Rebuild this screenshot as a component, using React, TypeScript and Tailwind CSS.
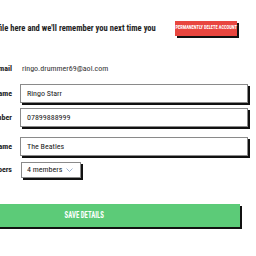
import React from 'react';

const font = { fontFamily: '"Roboto Condensed", "Liberation Sans Narrow", sans-serif' };

const Field = ({ label, value }: { label: string; value: string }) => (
    <div className="flex items-center">
        <label className="w-[92px] shrink-0 text-right text-[8px] font-bold text-[#222]">{label}</label>
        <div className="ml-[8px] w-[228px] h-[19px] flex items-center px-[6px] border border-[#8a8a8a] bg-white shadow-[2px_2px_0_#111] text-[8px] text-[#1a1a1a]">
            {value}
        </div>
    </div>
);

export default function App() {
    return (
        <div className="w-[256px] h-[256px] overflow-hidden bg-white" style={font}>
            <div className="-ml-[80px] w-[328px]">
                <div className="flex items-center justify-end pt-[21px] pr-[11px]">
                    <p className="whitespace-nowrap text-[9.6px] font-bold text-[#1e1e1e] origin-right scale-x-[0.89]">
                        Update your profile here and we'll remember you next time you
                    </p>
                    <button className="ml-[20px] w-[66px] h-[15px] bg-[#e8463f] shadow-[2px_2px_0_#111] text-white text-[4.5px] font-bold uppercase whitespace-nowrap">
                        Permanently delete account
                    </button>
                </div>

                <div className="mt-[27px] flex items-center">
                    <span className="w-[92px] text-right text-[8px] font-bold text-[#222]">Email</span>
                    <span className="ml-[10px] text-[8px] text-[#333]">ringo.drummer69@aol.com</span>
                </div>

                <div className="mt-[9px] flex flex-col gap-[5px]">
                    <Field label="Your name" value="Ringo Starr" />
                    <Field label="Phone number" value="07899888999" />
                </div>

                <div className="mt-[10px] flex flex-col gap-[6px]">
                    <Field label="Band name" value="The Beatles" />
                    <div className="flex items-center">
                        <label className="w-[92px] text-right text-[8px] font-bold text-[#222]">Band members</label>
                        <div className="ml-[9px] w-[60px] h-[16px] flex items-center justify-between pl-[5px] pr-[7px] border border-[#8a8a8a] bg-white shadow-[2px_2px_0_#111] text-[8px] text-[#1a1a1a] whitespace-nowrap">
                            <span>4 members</span>
                            <svg width="7" height="4" viewBox="0 0 7 4" fill="none" stroke="#9fb4d0" strokeWidth="1">
                                <path d="M0.5 0.5l3 3 3-3" />
                            </svg>
                        </div>
                    </div>
                </div>

                <div className="mt-[23px] pr-[8px]">
                    <button className="w-full h-[23px] bg-[#5ccb78] shadow-[2px_2px_0_#111] text-white text-[9px] font-bold uppercase">
                        <span className="inline-block scale-x-75 translate-x-[4px]">Save details</span>
                    </button>
                </div>
            </div>
        </div>
    );
}
